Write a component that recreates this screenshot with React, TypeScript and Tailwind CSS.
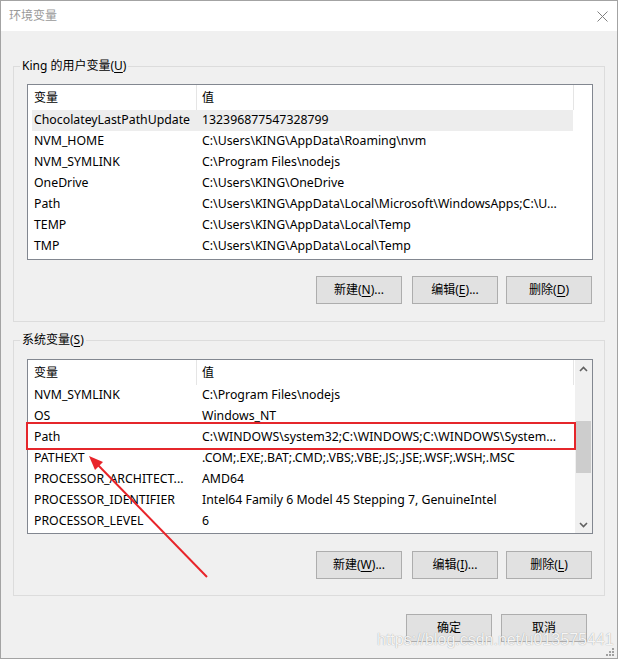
import React from "react";

const userRows: [string, string][] = [
  ["ChocolateyLastPathUpdate", "132396877547328799"],
  ["NVM_HOME", "C:\\Users\\KING\\AppData\\Roaming\\nvm"],
  ["NVM_SYMLINK", "C:\\Program Files\\nodejs"],
  ["OneDrive", "C:\\Users\\KING\\OneDrive"],
  ["Path", "C:\\Users\\KING\\AppData\\Local\\Microsoft\\WindowsApps;C:\\U..."],
  ["TEMP", "C:\\Users\\KING\\AppData\\Local\\Temp"],
  ["TMP", "C:\\Users\\KING\\AppData\\Local\\Temp"],
];

const sysRows: [string, string][] = [
  ["NVM_SYMLINK", "C:\\Program Files\\nodejs"],
  ["OS", "Windows_NT"],
  ["Path", "C:\\WINDOWS\\system32;C:\\WINDOWS;C:\\WINDOWS\\System..."],
  ["PATHEXT", ".COM;.EXE;.BAT;.CMD;.VBS;.VBE;.JS;.JSE;.WSF;.WSH;.MSC"],
  ["PROCESSOR_ARCHITECT...", "AMD64"],
  ["PROCESSOR_IDENTIFIER", "Intel64 Family 6 Model 45 Stepping 7, GenuineIntel"],
  ["PROCESSOR_LEVEL", "6"],
];

function Btn({ pre, mn, post = "", className = "" }: { pre: string; mn?: string; post?: string; className?: string }) {
  return (
    <button
      className={
        "w-[86px] h-[28px] bg-[#e1e1e1] border border-[#adadad] text-[12px] text-black flex items-center justify-center whitespace-pre " +
        className
      }
    >
      {pre}
      {mn ? (
        <>
          (<span className="underline underline-offset-2">{mn}</span>)
        </>
      ) : null}
      {post}
    </button>
  );
}

function Header() {
  return (
    <div className="flex h-[25px] w-[542px] bg-white">
      <div className="w-[165px] h-full flex items-center pl-[2px] border-r border-[#e5e5e5]">变量</div>
      <div className="flex-1 h-full flex items-center pl-[5px] border-r border-[#e5e5e5]">值</div>
    </div>
  );
}

function Row({ name, value, sel }: { name: string; value: string; sel?: boolean }) {
  return (
    <div className={"flex h-[21px] w-[541px] items-center text-[12.3px] " + (sel ? "bg-[#ededed]" : "")}>
      <div className="w-[165px] pl-[2px] whitespace-nowrap overflow-hidden">{name}</div>
      <div className="flex-1 pl-[5px] whitespace-nowrap overflow-hidden">{value}</div>
    </div>
  );
}

function Chevron({ up }: { up?: boolean }) {
  return (
    <svg width="9" height="6" viewBox="0 0 9 6" className="block">
      <path
        d={up ? "M1 5 L4.5 1.5 L8 5" : "M1 1 L4.5 4.5 L8 1"}
        fill="none"
        stroke="#606060"
        strokeWidth="1.6"
      />
    </svg>
  );
}

export default function App() {
  return (
    <div className="relative w-[618px] h-[659px] border border-[#a3a3a3] bg-[#f0f0f0] flex flex-col text-[12px] text-black font-['Noto_Sans','Noto_Sans_CJK_SC',sans-serif] overflow-hidden">
      {/* title bar */}
      <div className="h-[30px] bg-white flex items-center justify-between pl-[8px] pr-[9px] shrink-0">
        <span className="text-[#999999] text-[12px]">环境变量</span>
        <svg width="11" height="11" viewBox="0 0 11 11">
          <path d="M0.5 0.5 L10.5 10.5 M10.5 0.5 L0.5 10.5" stroke="#808080" strokeWidth="1" />
        </svg>
      </div>

      {/* body */}
      <div className="flex flex-col px-[12px] pt-[35px]">
        {/* user group */}
        <div className="relative border border-[#dcdcdc] h-[256px] pt-[17px] pl-[13px]">
          <span className="absolute -top-[9px] left-[6px] bg-[#f0f0f0] px-[2px] leading-[16px] whitespace-pre">
            King 的用户变量(<span className="underline underline-offset-2">U</span>)
          </span>
          <div className="relative w-[566px] h-[176px] border border-[#828790] bg-white pl-[4px]">
            <Header />
            {userRows.map((r, i) => (
              <Row key={i} name={r[0]} value={r[1]} sel={i === 0} />
            ))}
          </div>
          <div className="flex justify-end pr-[12px] mt-[16px]">
            <Btn pre="新建" mn="N" post="..." />
            <Btn pre="编辑" mn="E" post="..." className="ml-[10px]" />
            <Btn pre="删除" mn="D" className="ml-[8px]" />
          </div>
        </div>

        {/* system group */}
        <div className="relative border border-[#dcdcdc] h-[256px] mt-[18px] pt-[18px] pl-[13px]">
          <span className="absolute -top-[9px] left-[6px] bg-[#f0f0f0] px-[2px] leading-[16px] whitespace-pre">
            系统变量(<span className="underline underline-offset-2">S</span>)
          </span>
          <div className="relative w-[566px] h-[175px] border border-[#828790] bg-white pl-[4px] flex">
            <div className="flex flex-col">
              <Header />
              {sysRows.map((r, i) => (
                <Row key={i} name={r[0]} value={r[1]} />
              ))}
            </div>
            <div className="ml-auto w-[17px] h-full bg-[#f0f0f0] flex flex-col items-center">
              <div className="h-[17px] w-full flex items-center justify-center">
                <Chevron up />
              </div>
              <div className="mt-[44px] w-[15px] h-[52px] bg-[#cdcdcd]" />
              <div className="mt-auto h-[17px] w-full flex items-center justify-center">
                <Chevron />
              </div>
            </div>
            {/* red annotation box */}
            <div className="absolute left-[-2px] top-[62px] w-[550px] h-[28px] border-2 border-[#e5262b] pointer-events-none" />
          </div>
          <div className="flex justify-end pr-[12px] mt-[17px]">
            <Btn pre="新建" mn="W" post="..." />
            <Btn pre="编辑" mn="I" post="..." className="ml-[10px]" />
            <Btn pre="删除" mn="L" className="ml-[8px]" />
          </div>
        </div>

        {/* OK / Cancel */}
        <div className="flex justify-end pr-[18px] mt-[18px]">
          <Btn pre="确定" />
          <Btn pre="取消" className="ml-[9px]" />
        </div>
      </div>

      {/* red arrow annotation */}
      <svg className="absolute left-0 top-0 pointer-events-none" width="618" height="659" viewBox="0 0 618 659">
        <line x1="206" y1="576" x2="96" y2="463" stroke="#e8242a" strokeWidth="2" />
        <polygon points="88,455 94,469 102,461" fill="#e8242a" />
      </svg>

      {/* watermark */}
      <div className="absolute left-[376px] top-[627px] text-[16px] font-['Liberation_Sans',Arial,sans-serif] text-white/90 [text-shadow:0_0_1px_#8a8a8a] pointer-events-none whitespace-nowrap">
        https://blog.csdn.net/u013575441
      </div>

      {/* resize grip */}
      <svg className="absolute right-[3px] bottom-[2px]" width="9" height="9" viewBox="0 0 9 9">
        <rect x="7" y="1" width="2" height="2" fill="#a0a0a0" />
        <rect x="4" y="4" width="2" height="2" fill="#a0a0a0" />
        <rect x="7" y="4" width="2" height="2" fill="#a0a0a0" />
        <rect x="1" y="7" width="2" height="2" fill="#a0a0a0" />
        <rect x="4" y="7" width="2" height="2" fill="#a0a0a0" />
        <rect x="7" y="7" width="2" height="2" fill="#a0a0a0" />
      </svg>
    </div>
  );
}
